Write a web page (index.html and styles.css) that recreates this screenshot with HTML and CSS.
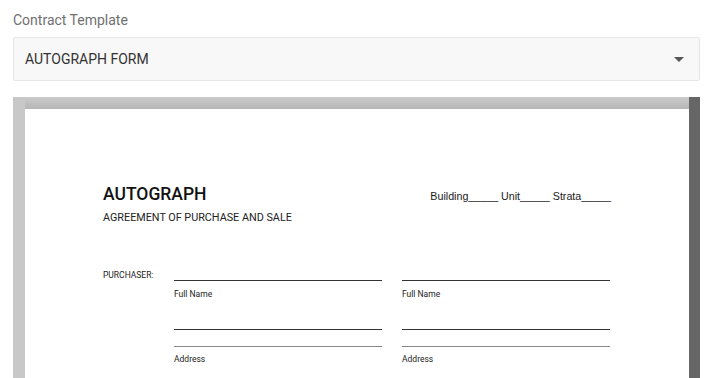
FILE: index.html
```html
<!DOCTYPE html>
<html>
<head>
<meta charset="utf-8">
<link rel="stylesheet" href="styles.css">
</head>
<body>
  <div class="field-label">Contract Template</div>
  <div class="select">
    <span class="select-value">AUTOGRAPH FORM</span>
    <span class="select-arrow"></span>
  </div>
  <div class="viewer">
    <div class="viewer-canvas">
      <div class="page-shadow"></div>
      <div class="page">
        <div class="doc-header">
          <div class="doc-title">AUTOGRAPH</div>
          <div class="doc-meta">Building_____ Unit_____ Strata_____</div>
        </div>
        <div class="doc-subtitle">AGREEMENT OF PURCHASE AND SALE</div>
        <div class="form-grid">
          <div class="row-label">PURCHASER:</div>
          <div class="blank">
            <div class="rule"></div>
            <div class="caption">Full Name</div>
          </div>
          <div class="blank">
            <div class="rule"></div>
            <div class="caption">Full Name</div>
          </div>
          <div></div>
          <div class="blank addr">
            <div class="rule"></div>
            <div class="rule light"></div>
            <div class="caption">Address</div>
          </div>
          <div class="blank addr">
            <div class="rule"></div>
            <div class="rule light"></div>
            <div class="caption">Address</div>
          </div>
        </div>
      </div>
    </div>
    <div class="scrollbar"></div>
  </div>
</body>
</html>
```
FILE: styles.css
```css
html, body {
  margin: 0;
  height: 100%;
  overflow: hidden;
  background: #fff;
}
body {
  padding: 12px 13px 0 13px;
  box-sizing: border-box;
  font-family: Roboto, "Liberation Sans", sans-serif;
  display: flex;
  flex-direction: column;
}
.field-label {
  font-size: 14px;
  line-height: 16px;
  color: #707070;
}
.select {
  margin-top: 9px;
  height: 44px;
  box-sizing: border-box;
  width: 687px;
  background: #f8f8f8;
  border: 1px solid #e6e6e6;
  border-radius: 2px;
  display: flex;
  align-items: center;
  justify-content: space-between;
  padding: 0 15px 0 11px;
}
.select-value {
  font-size: 14px;
  color: #333;
}
.select-arrow {
  width: 0;
  height: 0;
  border-left: 5px solid transparent;
  border-right: 5px solid transparent;
  border-top: 5px solid #555;
}
.viewer {
  margin-top: 16px;
  width: 687px;
  flex: 1;
  display: flex;
  min-height: 0;
}
.viewer-canvas {
  flex: 1;
  background: #c8c8c8;
  padding-left: 12px;
  display: flex;
  flex-direction: column;
  overflow: hidden;
}
.page-shadow {
  height: 12px;
  flex: none;
  background: linear-gradient(to bottom, #cbcbcb, #b6b6b6);
}
.page {
  flex: 1;
  background: #fff;
  padding: 74px 78px 0 78px;
}
.scrollbar {
  width: 11px;
  background: #666;
}
.doc-header {
  display: flex;
  justify-content: space-between;
  align-items: baseline;
}
.doc-title {
  font-size: 17.5px;
  line-height: 22px;
  font-weight: 500;
  color: #111;
}
.doc-meta {
  font-family: "Liberation Sans", Roboto, sans-serif;
  font-size: 10.7px;
  color: #1a1a1a;
}
.doc-subtitle {
  margin-top: 6px;
  font-size: 10.8px;
  line-height: 14px;
  color: #222;
}
.form-grid {
  margin-top: 45px;
  display: grid;
  grid-template-columns: 51px 208px 208px;
  column-gap: 20px;
  align-items: start;
}
.row-label {
  font-size: 8.5px;
  line-height: 10px;
  color: #222;
}
.blank {
  padding-top: 10px;
}
.blank.addr {
  padding-top: 30px;
}
.rule {
  height: 1px;
  background: #333;
}
.rule.light {
  margin-top: 16px;
  background: #888;
}
.caption {
  margin-top: 8px;
  font-size: 8.5px;
  line-height: 10px;
  color: #222;
}
.addr .caption {
  margin-top: 7px;
}
```
